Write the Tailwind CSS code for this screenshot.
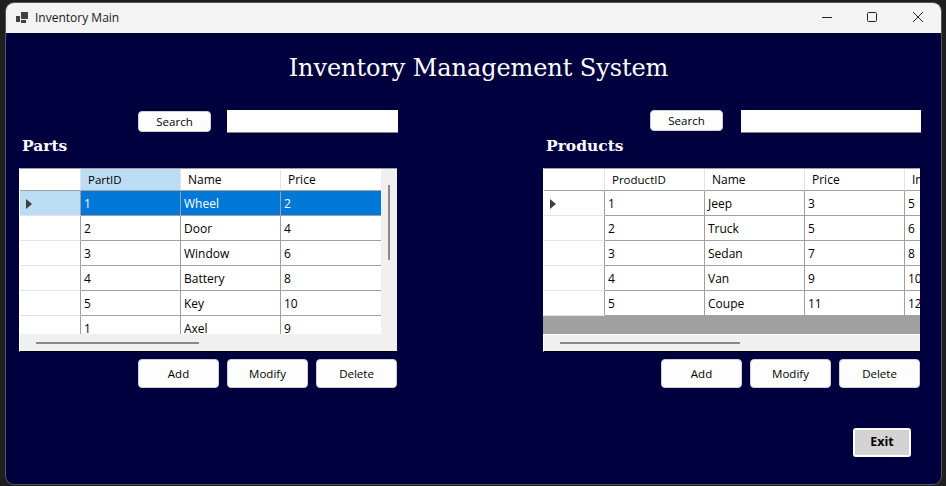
<!DOCTYPE html>
<html lang="en">
<head>
<meta charset="utf-8"/>
<title>Inventory Main</title>
<script src="https://cdn.jsdelivr.net/npm/@tailwindcss/browser@4"></script>
</head>
<body class="bg-[#1f1f1f] h-[486px] overflow-hidden pt-[3px] font-['Open_Sans',sans-serif] text-[12px] text-black">
<div class="ml-[6px] w-[935px] h-[481px] rounded-[8px] overflow-hidden bg-[#00003f] shadow-[0_0_0_1px_#555]">

  <!-- title bar -->
  <div class="h-[30px] bg-[#f3f3f3] flex items-center">
    <svg class="ml-[10px] mb-[1px] w-[12px] h-[12px]" viewBox="0 0 12 12" fill="#404040"><rect x="0" y="4" width="4" height="6"/><rect x="5" y="0" width="7" height="7"/><rect x="5" y="8" width="5" height="3"/></svg>
    <span class="ml-[7px] text-[#1a1a1a]">Inventory Main</span>
    <div class="ml-auto mb-[2px] flex items-center">
      <svg class="w-[10px] h-[10px] mr-[35px]" viewBox="0 0 10 10" stroke="#222" fill="none"><path d="M0 5.5H10"/></svg>
      <svg class="w-[10px] h-[10px] mr-[36px]" viewBox="0 0 10 10" stroke="#222" fill="none"><rect x="0.5" y="0.5" width="9" height="9" rx="1"/></svg>
      <svg class="w-[10px] h-[10px] mr-[18px]" viewBox="0 0 10 10" stroke="#222" fill="none"><path d="M0 0L10 10M10 0L0 10"/></svg>
    </div>
  </div>

  <h1 class="h-[77px] pt-[18px] pl-[10px] text-center text-white font-['DejaVu_Serif',serif] text-[24px] tracking-[-0.08px] leading-[34px]">Inventory Management System</h1>

  <div class="flex pl-[13px]">
    <!-- parts -->
    <section class="w-[385px]">
      <div class="flex items-start h-[23px]">
        <button class="ml-[119px] mt-px w-[73px] h-[21px] bg-[#fdfdfd] border border-[#d0d0d0] rounded-[4px] text-[11.5px]">Search</button>
        <input class="ml-[16px] w-[171px] h-[23px] bg-white border-b border-[#808080]" type="text"/>
      </div>
      <h2 class="h-[35px] pl-[3px] pt-px text-white font-['DejaVu_Serif',serif] font-bold text-[15.5px] leading-[24px]">Parts</h2>
      <div class="w-[378px] h-[184px] bg-[#f0f0f0] border-t border-l border-t-[#a0a0a0] border-l-white border-b border-b-black">
        <div class="flex h-[165px]">
          <div class="w-[361px] overflow-hidden bg-white">
            <div class="grid grid-cols-[61px_100px_100px_100px] h-[22px] pt-px leading-[20px]">
              <div class="border-r border-b border-r-[#e4e4e4] border-b-[#a0a0a0]"></div>
              <div class="border-r border-b border-r-[#e4e4e4] border-b-[#a0a0a0] bg-[#bcdcf4] pl-[7px] -mt-px pt-px text-[11.5px]">PartID</div>
              <div class="border-r border-b border-r-[#e4e4e4] border-b-[#a0a0a0] pl-[7px]">Name</div>
              <div class="border-b border-b-[#a0a0a0] pl-[7px]">Price</div>
            </div>
            <div class="grid grid-cols-[61px_100px_100px_100px] h-[25px] pt-px leading-[23px] text-white bg-[#0078d7]">
              <div class="-mt-px pt-[2px] border-r border-b border-r-[#a0a0a0] border-b-[#e4e4e4] bg-[#bcdcf4] flex items-center pl-[6px]"><svg class="w-[6px] h-[10px]" viewBox="0 0 6 10" fill="#404040"><path d="M0 0L6 5L0 10Z"/></svg></div>
              <div class="border-r border-b border-[#a0a0a0] pl-[3px]">1</div>
              <div class="border-r border-b border-[#a0a0a0] pl-[3px]">Wheel</div>
              <div class="border-b border-[#a0a0a0] pl-[3px]">2</div>
            </div>
            <div class="grid grid-cols-[61px_100px_100px_100px] h-[25px] pt-px leading-[23px]">
              <div class="-mt-px border-r border-b border-r-[#a0a0a0] border-b-[#e4e4e4]"></div>
              <div class="-mt-px pt-px border-r border-b border-[#a0a0a0] pl-[3px]">2</div>
              <div class="-mt-px pt-px border-r border-b border-[#a0a0a0] pl-[3px]">Door</div>
              <div class="-mt-px pt-px border-b border-[#a0a0a0] pl-[3px]">4</div>
            </div>
            <div class="grid grid-cols-[61px_100px_100px_100px] h-[25px] pt-px leading-[23px]">
              <div class="-mt-px border-r border-b border-r-[#a0a0a0] border-b-[#e4e4e4]"></div>
              <div class="-mt-px pt-px border-r border-b border-[#a0a0a0] pl-[3px]">3</div>
              <div class="-mt-px pt-px border-r border-b border-[#a0a0a0] pl-[3px]">Window</div>
              <div class="-mt-px pt-px border-b border-[#a0a0a0] pl-[3px]">6</div>
            </div>
            <div class="grid grid-cols-[61px_100px_100px_100px] h-[25px] pt-px leading-[23px]">
              <div class="-mt-px border-r border-b border-r-[#a0a0a0] border-b-[#e4e4e4]"></div>
              <div class="-mt-px pt-px border-r border-b border-[#a0a0a0] pl-[3px]">4</div>
              <div class="-mt-px pt-px border-r border-b border-[#a0a0a0] pl-[3px]">Battery</div>
              <div class="-mt-px pt-px border-b border-[#a0a0a0] pl-[3px]">8</div>
            </div>
            <div class="grid grid-cols-[61px_100px_100px_100px] h-[25px] pt-px leading-[23px]">
              <div class="-mt-px border-r border-b border-r-[#a0a0a0] border-b-[#e4e4e4]"></div>
              <div class="-mt-px pt-px border-r border-b border-[#a0a0a0] pl-[3px]">5</div>
              <div class="-mt-px pt-px border-r border-b border-[#a0a0a0] pl-[3px]">Key</div>
              <div class="-mt-px pt-px border-b border-[#a0a0a0] pl-[3px]">10</div>
            </div>
            <div class="grid grid-cols-[61px_100px_100px_100px] h-[25px] pt-px leading-[23px]">
              <div class="-mt-px border-r border-b border-r-[#a0a0a0] border-b-[#e4e4e4]"></div>
              <div class="-mt-px pt-px border-r border-b border-[#a0a0a0] pl-[3px]">1</div>
              <div class="-mt-px pt-px border-r border-b border-[#a0a0a0] pl-[3px]">Axel</div>
              <div class="-mt-px pt-px border-b border-[#a0a0a0] pl-[3px]">9</div>
            </div>
          </div>
          <div class="flex-1 pt-[16px] pl-[7px]"><div class="w-[2px] h-[75px] bg-[#8a8a8a]"></div></div>
        </div>
        <div class="pt-[8px] pl-[16px]"><div class="w-[163px] h-[2px] bg-[#8a8a8a]"></div></div>
      </div>
      <div class="flex mt-[7px] gap-[8px] ml-[119px]">
        <button class="w-[81px] h-[29px] bg-[#fdfdfd] border border-[#d0d0d0] rounded-[4px] text-[11.5px]">Add</button>
        <button class="w-[81px] h-[29px] bg-[#fdfdfd] border border-[#d0d0d0] rounded-[4px] text-[11.5px]">Modify</button>
        <button class="w-[81px] h-[29px] bg-[#fdfdfd] border border-[#d0d0d0] rounded-[4px] text-[11.5px]">Delete</button>
      </div>
    </section>

    <!-- products -->
    <section class="ml-[139px] w-[378px]">
      <div class="flex items-start h-[23px]">
        <button class="ml-[107px] w-[73px] h-[21px] bg-[#fdfdfd] border border-[#d0d0d0] rounded-[4px] text-[11.5px]">Search</button>
        <input class="ml-[18px] w-[180px] h-[23px] bg-white border-b border-[#808080]" type="text"/>
      </div>
      <h2 class="h-[35px] pl-[3px] pt-px text-white font-['DejaVu_Serif',serif] font-bold text-[15.5px] leading-[24px]">Products</h2>
      <div class="w-[377px] h-[184px] bg-[#f0f0f0] border-t border-l border-t-[#a0a0a0] border-l-white border-b border-b-black">
        <div class="-ml-px h-[165px] overflow-hidden bg-[#a0a0a0]">
          <div class="w-[462px] border-l border-white">
            <div class="grid grid-cols-[61px_100px_100px_100px_100px] h-[22px] leading-[20px] bg-white">
              <div class="border-r border-b border-r-[#e4e4e4] border-b-[#a0a0a0]"></div>
              <div class="pt-px border-r border-b border-r-[#e4e4e4] border-b-[#a0a0a0] pl-[7px] text-[11.5px]">ProductID</div>
              <div class="pt-px border-r border-b border-r-[#e4e4e4] border-b-[#a0a0a0] pl-[7px]">Name</div>
              <div class="pt-px border-r border-b border-r-[#e4e4e4] border-b-[#a0a0a0] pl-[7px]">Price</div>
              <div class="pt-px border-b border-b-[#a0a0a0] pl-[7px]">Inventory</div>
            </div>
            <div class="grid grid-cols-[61px_100px_100px_100px_100px] h-[25px] leading-[23px] bg-white">
              <div class="pt-[2px] border-r border-b border-r-[#a0a0a0] border-b-[#e4e4e4] flex items-center pl-[6px]"><svg class="w-[6px] h-[10px]" viewBox="0 0 6 10" fill="#404040"><path d="M0 0L6 5L0 10Z"/></svg></div>
              <div class="pt-px border-r border-b border-[#a0a0a0] pl-[3px]">1</div>
              <div class="pt-px border-r border-b border-[#a0a0a0] pl-[3px]">Jeep</div>
              <div class="pt-px border-r border-b border-[#a0a0a0] pl-[3px]">3</div>
              <div class="pt-px border-b border-[#a0a0a0] pl-[3px]">5</div>
            </div>
            <div class="grid grid-cols-[61px_100px_100px_100px_100px] h-[25px] leading-[23px] bg-white">
              <div class="border-r border-b border-r-[#a0a0a0] border-b-[#e4e4e4]"></div>
              <div class="pt-px border-r border-b border-[#a0a0a0] pl-[3px]">2</div>
              <div class="pt-px border-r border-b border-[#a0a0a0] pl-[3px]">Truck</div>
              <div class="pt-px border-r border-b border-[#a0a0a0] pl-[3px]">5</div>
              <div class="pt-px border-b border-[#a0a0a0] pl-[3px]">6</div>
            </div>
            <div class="grid grid-cols-[61px_100px_100px_100px_100px] h-[25px] leading-[23px] bg-white">
              <div class="border-r border-b border-r-[#a0a0a0] border-b-[#e4e4e4]"></div>
              <div class="pt-px border-r border-b border-[#a0a0a0] pl-[3px]">3</div>
              <div class="pt-px border-r border-b border-[#a0a0a0] pl-[3px]">Sedan</div>
              <div class="pt-px border-r border-b border-[#a0a0a0] pl-[3px]">7</div>
              <div class="pt-px border-b border-[#a0a0a0] pl-[3px]">8</div>
            </div>
            <div class="grid grid-cols-[61px_100px_100px_100px_100px] h-[25px] leading-[23px] bg-white">
              <div class="border-r border-b border-r-[#a0a0a0] border-b-[#e4e4e4]"></div>
              <div class="pt-px border-r border-b border-[#a0a0a0] pl-[3px]">4</div>
              <div class="pt-px border-r border-b border-[#a0a0a0] pl-[3px]">Van</div>
              <div class="pt-px border-r border-b border-[#a0a0a0] pl-[3px]">9</div>
              <div class="pt-px border-b border-[#a0a0a0] pl-[3px]">10</div>
            </div>
            <div class="grid grid-cols-[61px_100px_100px_100px_100px] h-[25px] leading-[23px] bg-white">
              <div class="border-r border-b border-r-[#a0a0a0] border-b-[#e4e4e4]"></div>
              <div class="pt-px border-r border-b border-[#a0a0a0] pl-[3px]">5</div>
              <div class="pt-px border-r border-b border-[#a0a0a0] pl-[3px]">Coupe</div>
              <div class="pt-px border-r border-b border-[#a0a0a0] pl-[3px]">11</div>
              <div class="pt-px border-b border-[#a0a0a0] pl-[3px]">12</div>
            </div>
          </div>
        </div>
        <div class="border-t border-white pt-[7px] pl-[16px]"><div class="w-[180px] h-[2px] bg-[#8a8a8a]"></div></div>
      </div>
      <div class="flex mt-[7px] gap-[8px] ml-[118px]">
        <button class="w-[81px] h-[29px] bg-[#fdfdfd] border border-[#d0d0d0] rounded-[4px] text-[11.5px]">Add</button>
        <button class="w-[81px] h-[29px] bg-[#fdfdfd] border border-[#d0d0d0] rounded-[4px] text-[11.5px]">Modify</button>
        <button class="w-[81px] h-[29px] bg-[#fdfdfd] border border-[#d0d0d0] rounded-[4px] text-[11.5px]">Delete</button>
      </div>
    </section>
  </div>

  <div class="flex justify-end pr-[30px] mt-[40px]">
    <button class="w-[58px] h-[29px] bg-[#d3d3d3] border-2 border-white rounded-[3px] font-bold text-[12.5px]">Exit</button>
  </div>
</div>
</body>
</html>
